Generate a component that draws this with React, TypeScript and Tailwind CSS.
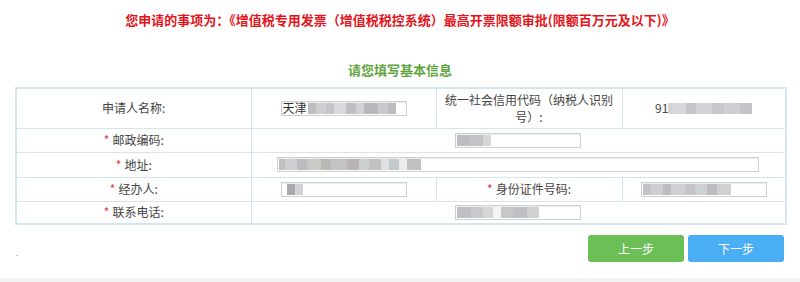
import React from "react"

// blurred placeholder for masked values
function Masked({ blocks }: { blocks: [number, string][] }) {
  return (
    <span className="inline-flex h-[11px] shrink-0 items-stretch blur-[0.6px]">
      {blocks.map(([w, c], i) => (
        <span key={i} style={{ width: w, background: c }} />
      ))}
    </span>
  )
}

const grey1: [number, string][] = [
  [8, "#bdbdc2"], [10, "#cfcfd2"], [8, "#c4c4c8"], [12, "#d9d9dc"], [10, "#bfbfc3"], [8, "#d2d2d5"],
  [14, "#b8b8bd"], [10, "#c9c9cc"], [8, "#bcbcc0"],
]

function Field({ width, children }: { width: string; children?: React.ReactNode }) {
  return (
    <div
      className={`mx-auto flex h-[15px] items-center overflow-hidden border border-[#cfcfcf] bg-white pl-[1px] shadow-[inset_0_1px_1px_rgba(0,0,0,0.08)] ${width}`}
    >
      {children}
    </div>
  )
}

function Label({ text, required }: { text: string; required?: boolean }) {
  return (
    <span>
      {required && <span className="mr-[3px] text-[#e53935]">*</span>}
      {text}
    </span>
  )
}

export default function App() {
  const td = "border border-[#d3e5f0] text-center align-middle"

  return (
    <div
      className="relative h-[282px] w-[800px] overflow-hidden bg-white text-[12px] text-[#444]"
      style={{ fontFamily: '"Microsoft YaHei", "Noto Sans CJK SC", sans-serif' }}
    >
      <div className="flex h-[40px] items-center justify-center text-[13px] font-bold text-[#e4141b]">
        您申请的事项为：《增值税专用发票（增值税税控系统）最高开票限额审批(限额百万元及以下)》
      </div>

      <div className="mt-[18px] flex h-[24px] items-center justify-center text-[13px] font-bold text-[#5fa43d]">
        请您填写基本信息
      </div>

      <div className="mt-[5px] px-[15px]">
        <table className="w-[770px] table-fixed border-collapse border-2 border-[#d3e5f0]">
          <colgroup>
            <col className="w-[235px]" />
            <col className="w-[185px]" />
            <col className="w-[186px]" />
            <col className="w-[164px]" />
          </colgroup>
          <tbody>
            <tr className="h-[40px]">
              <td className={td}>
                <Label text="申请人名称:" />
              </td>
              <td className={td}>
                <Field width="w-[126px]">
                  <span className="mr-[1px] shrink-0 whitespace-nowrap leading-none text-[#333]">天津</span>
                  <Masked blocks={grey1} />
                </Field>
              </td>
              <td className={`${td} px-[8px] leading-[17px]`}>统一社会信用代码（纳税人识别号）:</td>
              <td className={td}>
                <div className="flex items-center justify-center">
                  <span className="shrink-0 text-[#444]">91</span>
                  <Masked blocks={[[4, "#d4d4d7"], [14, "#d8d8db"], [10, "#c6c6c9"], [16, "#d3d3d6"], [12, "#c8c8cb"], [16, "#cfcfd2"], [12, "#c4c4c7"]]} />
                </div>
              </td>
            </tr>
            <tr className="h-[24px]">
              <td className={td}>
                <Label text="邮政编码:" required />
              </td>
              <td className={td} colSpan={3}>
                <Field width="w-[126px]">
                  <Masked blocks={[[12, "#bdbdc1"], [14, "#c3c3c7"], [8, "#d6d6d9"]]} />
                </Field>
              </td>
            </tr>
            <tr className="h-[25px]">
              <td className={td}>
                <Label text="地址:" required />
              </td>
              <td className={td} colSpan={3}>
                <Field width="w-[482px]">
                  <Masked
                    blocks={[
                      [6, "#bfbfc2"], [12, "#cfcfd2"], [10, "#bcbcc0"], [14, "#c9cac6"], [10, "#b8b9b5"], [16, "#c3c3c6"],
                      [12, "#b9b4b8"], [10, "#cdcfd0"], [12, "#c2c2c5"], [8, "#e0e0e2"], [10, "#c4c9cb"], [8, "#ececee"],
                      [14, "#c1c1c4"],
                    ]}
                  />
                </Field>
              </td>
            </tr>
            <tr className="h-[24px]">
              <td className={td}>
                <Label text="经办人:" required />
              </td>
              <td className={td}>
                <Field width="w-[126px]">
                  <Masked blocks={[[4, "#ffffff"], [8, "#a9a9ad"], [8, "#d3d3d6"]]} />
                </Field>
              </td>
              <td className={td}>
                <Label text="身份证件号码:" required />
              </td>
              <td className={td}>
                <Field width="w-[126px]">
                  <Masked
                    blocks={[[8, "#c4c4c8"], [12, "#cfcfd2"], [8, "#bcbcc0"], [14, "#d0d0d3"], [10, "#c4c4c8"], [12, "#ccd2d2"], [10, "#bdbdc1"], [14, "#d0d0d3"]]}
                  />
                </Field>
              </td>
            </tr>
            <tr className="h-[23px]">
              <td className={td}>
                <Label text="联系电话:" required />
              </td>
              <td className={td} colSpan={3}>
                <Field width="w-[126px]">
                  <Masked blocks={[[14, "#c0c0c4"], [12, "#c9c9cc"], [10, "#d6d6d9"], [8, "#f4f4f5"], [12, "#c7c7ca"], [14, "#c0c0c4"], [12, "#d0d0d3"]]} />
                </Field>
              </td>
            </tr>
          </tbody>
        </table>
      </div>

      <div className="mt-[10px] flex items-start justify-between pl-[16px] pr-[16px]">
        <span className="mt-[14px] text-[8px] leading-none text-[#888]">.</span>
        <div className="flex gap-[4px]">
          <button className="h-[27px] w-[96px] rounded-[3px] bg-[#6cbf56] text-[12px] text-white">上一步</button>
          <button className="h-[27px] w-[96px] rounded-[3px] bg-[#4aaef5] text-[12px] text-white">下一步</button>
        </div>
      </div>

      <div className="absolute bottom-0 left-0 h-[4px] w-full bg-[#f2f2f2]" />
    </div>
  )
}
